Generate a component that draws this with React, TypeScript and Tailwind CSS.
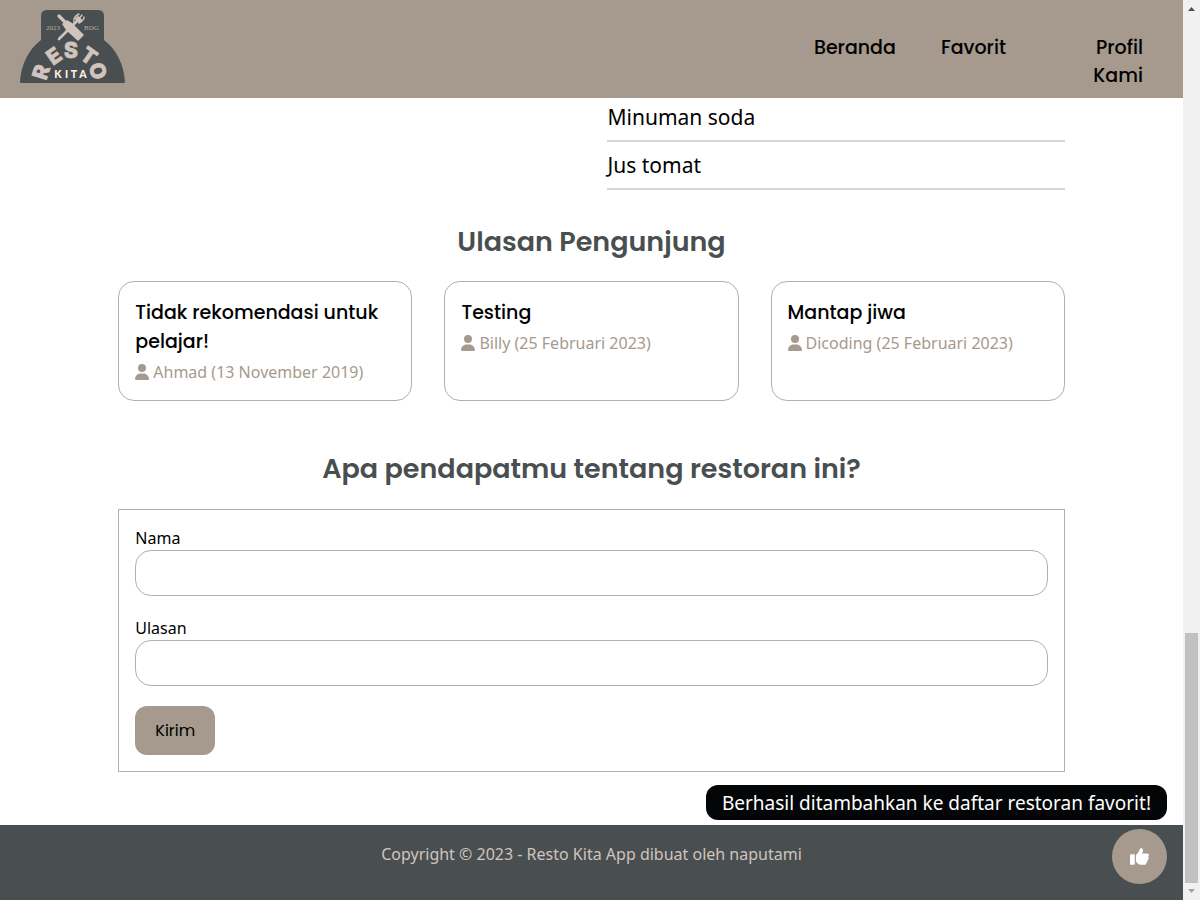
import { FaThumbsUp, FaUser } from 'react-icons/fa6';

const menuItems = ['Minuman soda', 'Jus tomat'];

const reviews = [
  { text: 'Tidak rekomendasi untuk pelajar!', author: 'Ahmad', date: '13 November 2019' },
  { text: 'Testing', author: 'Billy', date: '25 Februari 2023' },
  { text: 'Mantap jiwa', author: 'Dicoding', date: '25 Februari 2023' },
];

const fields = [
  { id: 'nama', label: 'Nama' },
  { id: 'ulasan', label: 'Ulasan' },
];

const logoLetters = [
  { letter: 'R', x: 21, y: 62, angle: -72 },
  { letter: 'E', x: 34, y: 46, angle: -35 },
  { letter: 'S', x: 51, y: 40, angle: 0 },
  { letter: 'T', x: 69, y: 46, angle: 35 },
  { letter: 'O', x: 78, y: 61, angle: 72 },
];

function Logo() {
  return (
    <svg width="105" height="74" viewBox="0 0 105 74" role="img" aria-label="Resto Kita">
      <path
        d="M27 0H78Q84 0 84 6V30C96 39 104 54 105 72Q105 73 104 73H1Q0 73 0 72C1 54 9 39 21 30V6Q21 0 27 0Z"
        fill="#494f50"
      />
      <g fill="#d0c4be" stroke="#d0c4be" strokeLinecap="round">
        <path d="M39 29L57 11" strokeWidth="2.6" />
        <path d="M54 12C53 8 55 6 59 4M57 11L62 5M59 13C61 12 64 10 64 7" strokeWidth="1.4" fill="none" />
        <path d="M55 9L59 13L62 10L58 6Z" strokeWidth="0.6" />
        <path d="M39 6L45 12" strokeWidth="3.2" />
        <path d="M43 14L47 11L52 14L63 25L58 30L47 20Z" strokeWidth="1.5" strokeLinejoin="round" />
      </g>
      <g fill="#b5aca3" fontFamily="'Liberation Serif', serif" fontSize="7">
        <text x="26" y="20">2023</text>
        <text x="64" y="20">BDG</text>
      </g>
      <g
        fill="#d0c4be"
        stroke="#d0c4be"
        strokeWidth="0.8"
        fontFamily="Inter, sans-serif"
        fontWeight="800"
        fontSize="21"
        textAnchor="middle"
      >
        {logoLetters.map(({ letter, x, y, angle }) => (
          <text key={letter} x={x} y={y} dy="7.5" transform={`rotate(${angle} ${x} ${y})`}>
            {letter}
          </text>
        ))}
      </g>
      <g fill="#fff3e8" fontFamily="Lato, sans-serif" fontWeight="900" fontSize="10.5" textAnchor="middle">
        <text x="38" y="68">K</text>
        <text x="46.500" y="68">I</text>
        <text x="54" y="68">T</text>
        <text x="63" y="68">A</text>
      </g>
    </svg>
  );
}

function Header() {
  return (
    <header className="flex h-[98px] items-start justify-between bg-[#a59a8d] px-5 pt-[10px]">
      <a href="#">
        <Logo />
      </a>
      <nav className="flex gap-[45px] pt-6 pr-5 font-[Poppins,Inter,sans-serif] text-[19px] leading-7 font-medium text-black">
        <a href="#">Beranda</a>
        <a href="#favorit">Favorit</a>
        <a href="#profil" className="w-23 pl-8 text-right">
          Profil Kami
        </a>
      </nav>
    </header>
  );
}

function Heading({ children }: { children: string }) {
  return (
    <h2 className="text-center font-[Poppins,Inter,sans-serif] text-[27px] leading-11 font-semibold text-[#494f50]">
      {children}
    </h2>
  );
}

function Reviews() {
  return (
    <section className="mt-[30px]">
      <Heading>Ulasan Pengunjung</Heading>
      <div className="mt-[17px] grid grid-cols-3 gap-8">
        {reviews.map(({ text, author, date }) => (
          <article key={author} className="rounded-2xl border border-[#b8afa5] p-4">
            <h3 className="font-[Poppins,Inter,sans-serif] text-[19px] leading-[29px] font-medium text-black">
              {text}
            </h3>
            <p className="mt-1 flex items-center gap-1 text-base leading-6 text-[#a59a8d]">
              <FaUser className="size-4 w-[14px]" aria-hidden="true" />
              {author} ({date})
            </p>
          </article>
        ))}
      </div>
    </section>
  );
}

function ReviewForm() {
  return (
    <section className="mt-[46px]">
      <Heading>Apa pendapatmu tentang restoran ini?</Heading>
      <form className="mt-[18px] flex flex-col items-start gap-5 border border-[#b8afa5] p-4">
        {fields.map(({ id, label }) => (
          <div key={id} className="flex w-full flex-col">
            <label htmlFor={id} className="text-base leading-6">
              {label}
            </label>
            <input id={id} type="text" className="h-[46px] rounded-2xl border border-[#b8afa5] bg-white px-4" />
          </div>
        ))}
        <button
          type="button"
          className="h-[49px] rounded-xl bg-[#a59a8d] px-5 font-[Poppins,Inter,sans-serif] text-base text-black"
        >
          Kirim
        </button>
      </form>
    </section>
  );
}

function Scrollbar() {
  return (
    <div className="sticky top-0 flex h-screen w-[17px] shrink-0 flex-col items-center bg-[#f1f1f1]" aria-hidden="true">
      <svg width="17" height="17" viewBox="0 0 17 17">
        <path d="M5 11L8.500 7L12 11Z" fill="#505050" />
      </svg>
      <div className="flex-1" />
      <div className="h-[250px] w-[13px] bg-[#c1c1c1]" />
      <svg width="17" height="17" viewBox="0 0 17 17">
        <path d="M5 6L8.500 10L12 6Z" fill="#a3a3a3" />
      </svg>
    </div>
  );
}

export default function App() {
  return (
    <div className="flex min-h-screen bg-white font-['Noto_Sans',sans-serif] text-black">
      <div className="flex min-w-0 flex-1 flex-col">
        <Header />
        <main className="mx-auto w-4/5 flex-1 pb-[53px]">
          <div className="grid grid-cols-2 gap-8">
            <ul className="col-start-2">
              {menuItems.map((item) => (
                <li
                  key={item}
                  className="border-b-2 border-[#dbd7d2] pt-[9px] pb-2 text-[21px] leading-[29px] first:pt-[5px]"
                >
                  {item}
                </li>
              ))}
            </ul>
          </div>
          <Reviews />
          <ReviewForm />
        </main>
        <footer className="h-[75px] bg-[#494f50] pt-[17px] text-center text-base leading-6 text-[#d0c4be]">
          Copyright © 2023 - Resto Kita App dibuat oleh naputami
        </footer>
      </div>
      <Scrollbar />
      <div
        role="status"
        className="fixed right-[33px] bottom-20 rounded-xl bg-[#030506] px-4 pt-[5px] pb-[3px] text-[19px] leading-[27px] text-white"
      >
        Berhasil ditambahkan ke daftar restoran favorit!
      </div>
      <button
        type="button"
        aria-label="Suka"
        className="fixed right-[33px] bottom-4 flex size-[55px] items-center justify-center rounded-full bg-[#a59a8d] text-[19px] text-white"
      >
        <FaThumbsUp />
      </button>
    </div>
  );
}
